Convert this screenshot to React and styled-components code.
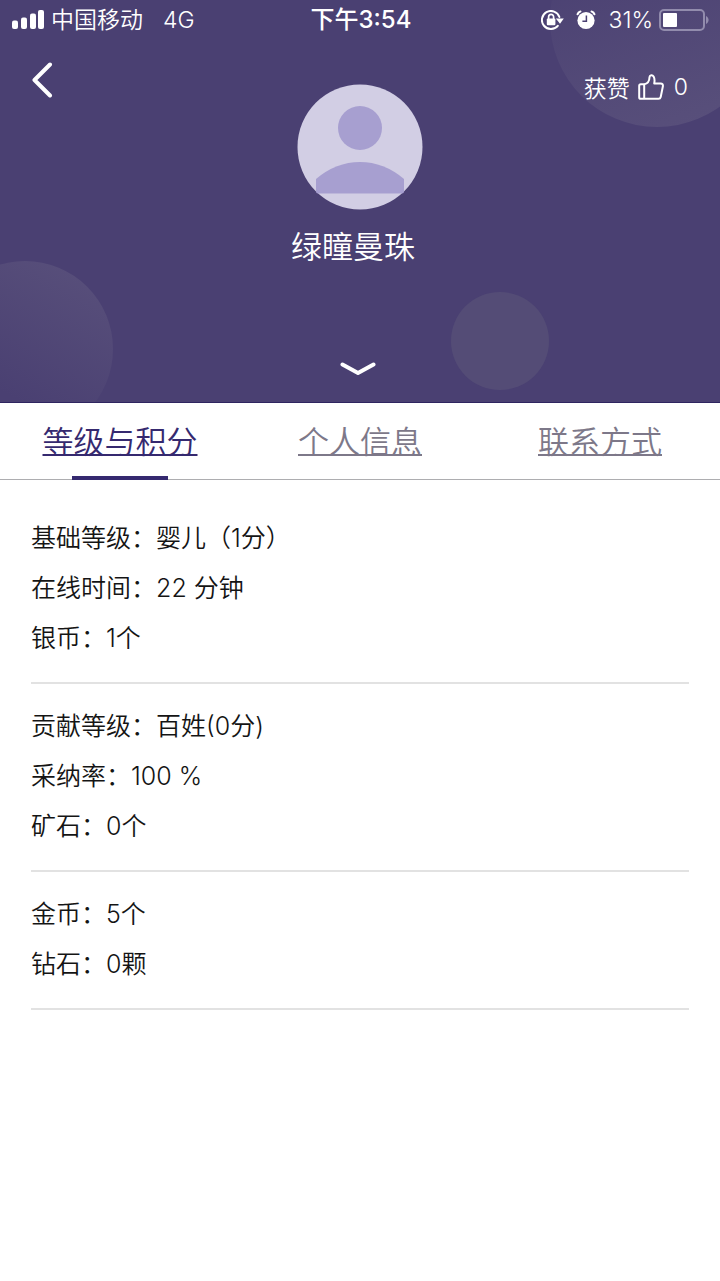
import React, { useState } from "react";
import styled, { createGlobalStyle } from "styled-components";

const tabs = ["等级与积分", "个人信息", "联系方式"];

const groups = [
  [
    { label: "基础等级", value: "婴儿（1分）" },
    { label: "在线时间", value: "22 分钟" },
    { label: "银币", value: "1个" },
  ],
  [
    { label: "贡献等级", value: "百姓(0分)" },
    { label: "采纳率", value: "100 %" },
    { label: "矿石", value: "0个" },
  ],
  [
    { label: "金币", value: "5个" },
    { label: "钻石", value: "0颗" },
  ],
];

const SignalIcon = () => (
  <svg width="32" height="20" viewBox="0 0 32 20" fill="#fff">
    <rect x="0" y="10.500" width="6" height="8.500" rx="2" />
    <rect x="9" y="7.500" width="6" height="11.500" rx="2" />
    <rect x="18" y="3.500" width="6" height="15.500" rx="2" />
    <rect x="26" y="0" width="6" height="19" rx="2" />
  </svg>
);

const LockIcon = () => (
  <svg width="23" height="20" viewBox="0 0 23 20" fill="none">
    <path
      d="M18.400 7A9 9 0 1 0 16.800 15.800"
      stroke="#fff"
      strokeWidth="2"
      strokeLinecap="round"
    />
    <path d="M14.800 8.600h8l-3.800 5.200z" fill="#fff" />
    <rect x="5.800" y="8.600" width="8.600" height="6.600" rx="1" fill="#fff" />
    <path d="M7.600 9V7a2.500 2.700 0 0 1 5 0V9" stroke="#fff" strokeWidth="1.700" />
  </svg>
);

const AlarmIcon = () => (
  <svg width="20" height="20" viewBox="0 0 20 20" fill="none">
    <circle cx="10" cy="10.500" r="8.600" fill="#fff" />
    <path
      d="M1.600 4.200C2 2.800 3 1.800 4.400 1.500M18.400 4.200C18 2.800 17 1.800 15.600 1.500"
      stroke="#fff"
      strokeWidth="2.200"
      strokeLinecap="round"
    />
    <path d="M10.400 5.500v5.700H6.400" stroke="#4a4072" strokeWidth="1.500" />
  </svg>
);

const BatteryIcon = () => (
  <svg width="51" height="22" viewBox="0 0 51 22" fill="none">
    <rect x="1" y="1" width="44" height="20" rx="4" stroke="#928cad" strokeWidth="2" />
    <rect x="4" y="4" width="14" height="14" rx="1" fill="#fff" />
    <path d="M47 7c3.400 1.400 3.400 6.600 0 8z" fill="#928cad" />
  </svg>
);

const BackIcon = () => (
  <svg width="22" height="36" viewBox="0 0 22 36" fill="none">
    <path
      d="M18 2.500L2.500 18L18 33.500"
      stroke="#fff"
      strokeWidth="4"
      strokeLinecap="round"
      strokeLinejoin="round"
    />
  </svg>
);

const ThumbIcon = () => (
  <svg width="26" height="26" viewBox="0 0 26 26" fill="none">
    <path
      d="M6.200 10.200H2.800Q1.200 10.200 1.200 11.800V23.200Q1.200 24.800 2.800 24.800H20.500Q22.300 24.800 22.700 23L24.900 12.300Q25.200 9.600 22.600 9.400H16.200C16.800 6.800 16.700 4.600 15.600 2.600C14.400 .4 11.700 .9 11.500 3.200C11.400 6.800 9.600 9.600 6.200 10.200V24.800"
      stroke="#fff"
      strokeWidth="2"
      strokeLinejoin="round"
    />
  </svg>
);

const ChevronIcon = () => (
  <svg width="36" height="14" viewBox="0 0 36 14" fill="none">
    <path
      d="M2.500 2.500L18 11L33.500 2.500"
      stroke="#fff"
      strokeWidth="4"
      strokeLinecap="round"
      strokeLinejoin="round"
    />
  </svg>
);

const Avatar = () => (
  <svg width="126" height="126" viewBox="0 0 126 126">
    <circle cx="63" cy="63" r="62.500" fill="#d2cee4" />
    <circle cx="63" cy="44" r="22" fill="#a79fd0" />
    <path d="M19 95Q39 78 63 78T107 95V107.500Q107 109.500 105 109.500H21Q19 109.500 19 107.500Z" fill="#a79fd0" />
  </svg>
);

const App = () => {
  const [current, setCurrent] = useState(0);

  return (
    <>
      <GlobalStyle />
      <Header>
        <Bubble $size={214} $top="-87px" $right="-44px" $angle="160deg" $from={0.1} />
        <Bubble $size={176} $bottom="-35px" $left="-63px" $angle="30deg" $from={0} />
        <Bubble $size={98} $bottom="12px" $right="171px" />
        <StatusBar>
          <StatusLeft>
            <SignalIcon />
            <Carrier>中国移动</Carrier>
            <span>4G</span>
          </StatusLeft>
          <Clock>下午3:54</Clock>
          <StatusRight>
            <LockIcon />
            <AlarmIcon />
            <Battery>
              31%
              <BatteryIcon />
            </Battery>
          </StatusRight>
        </StatusBar>
        <HeaderBody>
          <BackButton aria-label="返回">
            <BackIcon />
          </BackButton>
          <Profile>
            <Avatar />
            <Name>绿瞳曼珠</Name>
          </Profile>
          <Likes>
            获赞
            <ThumbIcon />
            <LikeCount>0</LikeCount>
          </Likes>
        </HeaderBody>
        <MoreButton aria-label="展开">
          <ChevronIcon />
        </MoreButton>
      </Header>
      <TabBar>
        {tabs.map((tab, index) => (
          <Tab
            key={tab}
            href="#"
            $active={index === current}
            onClick={(e) => {
              e.preventDefault();
              setCurrent(index);
            }}
          >
            {tab}
          </Tab>
        ))}
      </TabBar>
      <Content>
        {groups.map((group) => (
          <Group key={group[0].label}>
            {group.map((item) => (
              <Row key={item.label}>
                {item.label}：{item.value}
              </Row>
            ))}
          </Group>
        ))}
      </Content>
    </>
  );
};

export default App;

const GlobalStyle = createGlobalStyle`
  * {
    box-sizing: border-box;
  }
  body {
    margin: 0;
    background: #fff;
    color: #141414;
    font-family: Inter, "Noto Sans CJK SC", sans-serif;
    font-weight: 350;
  }
  svg {
    display: block;
    flex-shrink: 0;
  }
`;

const Header = styled.header`
  position: relative;
  overflow: hidden;
  color: #fff;
  background: #4a4072;
  border-bottom: 1px solid #2f2560;
`;

const Bubble = styled.div`
  position: absolute;
  top: ${(props) => props.$top || "auto"};
  right: ${(props) => props.$right || "auto"};
  bottom: ${(props) => props.$bottom || "auto"};
  left: ${(props) => props.$left || "auto"};
  width: ${(props) => props.$size}px;
  height: ${(props) => props.$size}px;
  border-radius: 50%;
  background: ${(props) =>
    props.$angle
      ? `linear-gradient(${props.$angle}, rgba(100, 92, 130, ${props.$from}) 30%, rgba(100, 92, 130, 0.6) 100%)`
      : "#544c76"};
`;

const StatusBar = styled.div`
  position: relative;
  display: grid;
  grid-template-columns: 1fr auto 1fr;
  align-items: center;
  height: 40px;
  padding: 0 10px 0 12px;
  font-size: 23px;
  line-height: 38px;
`;

const StatusLeft = styled.div`
  display: flex;
  align-items: center;
  gap: 7px;
`;

const Carrier = styled.span`
  margin-right: 13px;
`;

const Clock = styled.div`
  font-size: 24px;
  font-weight: 500;
`;

const StatusRight = styled.div`
  display: flex;
  align-items: center;
  justify-content: flex-end;
  gap: 12px;
`;

const Battery = styled.div`
  display: flex;
  align-items: center;
  gap: 6px;
`;

const HeaderBody = styled.div`
  position: relative;
  display: grid;
  grid-template-columns: 1fr auto 1fr;
  align-items: start;
  padding: 20px 32px 0;
`;

const IconButton = styled.button`
  display: flex;
  padding: 0;
  border: 0;
  background: none;
  cursor: pointer;
`;

const BackButton = styled(IconButton)`
  margin-top: 2px;
  justify-self: start;
`;

const Profile = styled.div`
  display: flex;
  flex-direction: column;
  align-items: center;
  padding-top: 24px;
`;

const Name = styled.h1`
  margin: 17px 0 0;
  padding-right: 14px;
  font-size: 31px;
  font-weight: 350;
  line-height: 40px;
`;

const Likes = styled.div`
  display: flex;
  align-items: center;
  justify-self: end;
  gap: 8px;
  height: 54px;
  font-size: 23px;
`;

const LikeCount = styled.span`
  margin-left: 2px;
`;

const MoreButton = styled(IconButton)`
  position: relative;
  margin: 95px auto 26px;
  padding-right: 4px;
`;

const TabBar = styled.nav`
  display: grid;
  grid-template-columns: repeat(3, 1fr);
  border-bottom: 1px solid #adadb0;
`;

const Tab = styled.a`
  position: relative;
  height: 76px;
  font-size: 31px;
  line-height: 78px;
  text-align: center;
  text-decoration: underline;
  text-decoration-thickness: 2px;
  text-decoration-skip-ink: none;
  color: ${(props) => (props.$active ? "#35296f" : "#7d7889")};

  &::after {
    content: "";
    display: ${(props) => (props.$active ? "block" : "none")};
    position: absolute;
    bottom: -1px;
    left: 30%;
    width: 40%;
    height: 4px;
    background: #35296f;
  }
`;

const Content = styled.main`
  padding: 16px 31px;
`;

const Group = styled.section`
  padding: 17px 0 19px;
  border-bottom: 2px solid #e2e2e2;
`;

const Row = styled.p`
  margin: 0;
  font-size: 25px;
  line-height: 50px;
`;
